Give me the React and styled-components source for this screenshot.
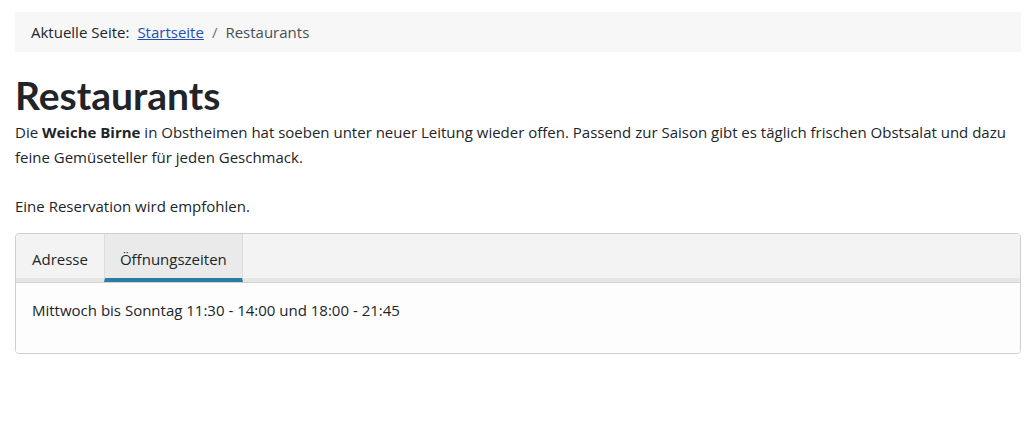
import React, { useState } from 'react';
import styled, { createGlobalStyle } from 'styled-components';

const GlobalStyle = createGlobalStyle`
  body {
    margin: 0;
    background: #fff;
    font-family: "Open Sans", "Noto Sans", sans-serif;
    font-size: 15px;
    color: #212529;
  }
`;

const Page = styled.main`
  padding: 12px 13px 0 15px;
`;

const Breadcrumb = styled.nav`
  display: flex;
  align-items: center;
  gap: 6px;
  height: 40px;
  padding: 0 16px;
  background: #f7f7f7;
  font-size: 15px;
  color: #212529;
`;

const Crumb = styled.a`
  color: #1f4fb4;
  text-decoration: underline;
  margin-left: 2px;
`;

const Divider = styled.span`
  color: #6c757d;
  padding: 0 2px;
`;

const Current = styled.span`
  color: #495057;
`;

const Title = styled.h1`
  margin: 24px 0 6px;
  font-family: Lato, "Open Sans", sans-serif;
  font-size: 39px;
  font-weight: 700;
  line-height: 38px;
  color: #212529;
`;

const Text = styled.p`
  margin: 0 0 ${(p) => (p.last ? '14px' : '24px')};
  line-height: 25px;
`;

const TabCard = styled.section`
  border: 1px solid #cfcfcf;
  border-radius: 4px;
  overflow: hidden;
`;

const TabList = styled.div`
  display: flex;
  background: #f3f3f3;
  border-bottom: 4px solid #e6e6e6;
  box-shadow: 0 1px 0 #d2d2d2;
`;

const Tab = styled.button`
  font: inherit;
  color: #212529;
  padding: 6px 15px 0;
  height: 38px;
  margin-bottom: -4px;
  background: ${(p) => (p.active ? '#eaeaea' : 'transparent')};
  border: none;
  border-left: 1px solid ${(p) => (p.active ? '#dcdcdc' : 'transparent')};
  border-right: 1px solid ${(p) => (p.active ? '#dcdcdc' : 'transparent')};
  border-bottom: 4px solid ${(p) => (p.active ? '#2b7ca3' : 'transparent')};
  box-sizing: content-box;
  cursor: pointer;
`;

const Panel = styled.div`
  background: #fdfdfd;
  padding: 17px 16px 25px;
  margin-top: 1px;
  min-height: 28px;
`;

const tabs = [
  { id: 'adresse', label: 'Adresse', content: 'Hauptstrasse 12, 9999 Obstheimen' },
  { id: 'zeiten', label: 'Öffnungszeiten', content: 'Mittwoch bis Sonntag 11:30 - 14:00 und 18:00 - 21:45' },
];

export default function App() {
  const [active, setActive] = useState('zeiten');
  const current = tabs.find((t) => t.id === active);

  return (
    <Page>
      <GlobalStyle />
      <Breadcrumb>
        <span>Aktuelle Seite:</span>
        <Crumb href="#">Startseite</Crumb>
        <Divider>/</Divider>
        <Current>Restaurants</Current>
      </Breadcrumb>
      <Title>Restaurants</Title>
      <Text>
        Die <strong>Weiche Birne</strong> in Obstheimen hat soeben unter neuer Leitung wieder offen.
        Passend zur Saison gibt es täglich frischen Obstsalat und dazu feine Gemüseteller für jeden
        Geschmack.
      </Text>
      <Text last>Eine Reservation wird empfohlen.</Text>
      <TabCard>
        <TabList>
          {tabs.map((t) => (
            <Tab key={t.id} active={t.id === active} onClick={() => setActive(t.id)}>
              {t.label}
            </Tab>
          ))}
        </TabList>
        <Panel>{current.content}</Panel>
      </TabCard>
    </Page>
  );
}
